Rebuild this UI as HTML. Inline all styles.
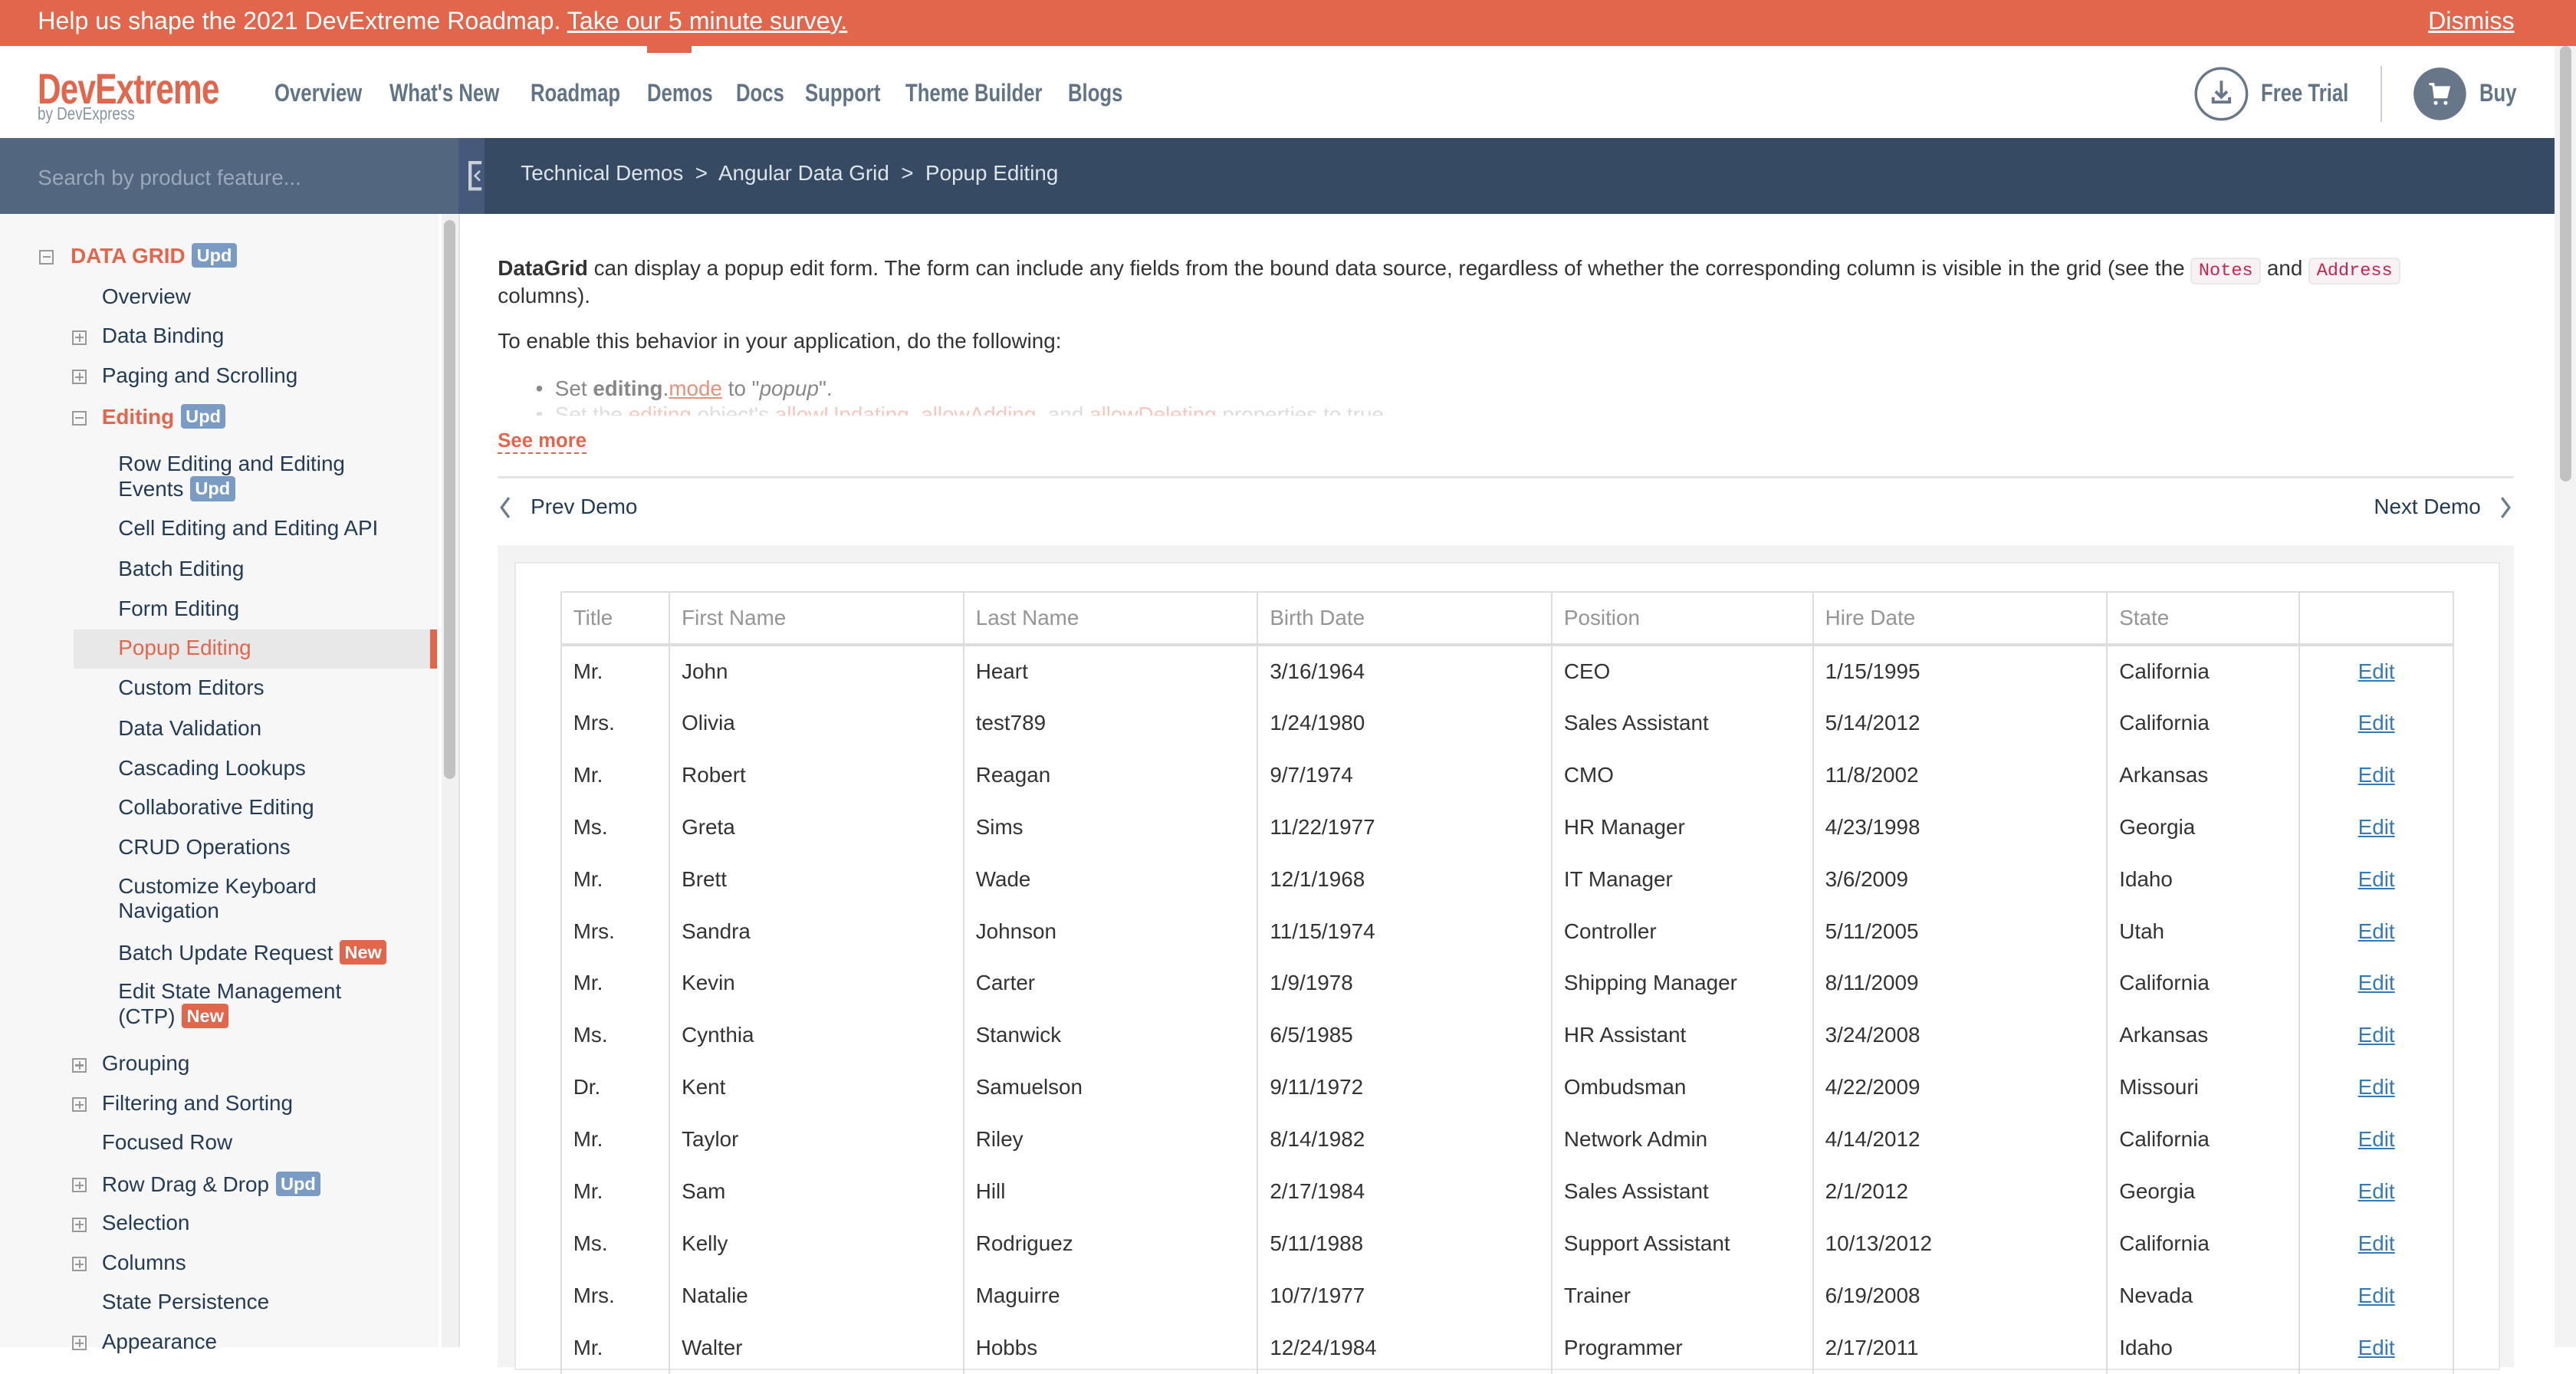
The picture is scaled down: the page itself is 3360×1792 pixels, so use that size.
<!DOCTYPE html>
<html><head><meta charset="utf-8">
<style>
html{zoom:2.14286}
body{margin:0;width:1568px;height:820px;overflow:hidden;font-family:"Liberation Sans",Arial,sans-serif;background:#fff;position:relative;color:#333}
.a{position:absolute;white-space:nowrap}
.banner{left:0;top:0;width:1568px;height:28px;background:#e2664c;color:#fff;font-size:15px}
.nav{font-family:"Liberation Sans",sans-serif;font-weight:bold;color:#617487;font-size:15px;transform:scaleX(0.8);transform-origin:0 0}
.si{position:absolute;left:62px;font-size:13px;color:#243b55;white-space:nowrap}
.s2{left:72px}
.pm{position:absolute;width:7px;height:7px;border:1px solid #999;font-size:0}
.pm:before{content:"";position:absolute;left:1px;top:3px;width:5px;height:1px;background:#999}
.pm.p:after{content:"";position:absolute;left:3px;top:1px;width:1px;height:5px;background:#999}
.badge{display:inline-block;color:#fff;font-weight:bold;font-size:11px;padding:0 3px;border-radius:2px;line-height:15px;vertical-align:1px;margin-left:4px}
.upd{background:#7a9cc4}.new{background:#e2664c}
table{border-collapse:collapse;font-size:13px;color:#333}
td,th{height:31.7px;padding:0 7px;text-align:left;font-weight:normal;box-sizing:border-box}
th{color:#959595;height:32px;border-right:1px solid #ddd;border-bottom:2px solid #ddd}
td{border-right:1px solid #ddd}
td a{color:#337ab7;text-decoration:underline}
code{font-family:"Liberation Mono",monospace;color:#c7254e;background:#f9f2f4;border:1px solid #e8e8e8;border-radius:3px;padding:1px 4px;font-size:11px}
</style></head><body>
<div class="a banner"><span class="a" style="left:23px;top:4px">Help us shape the 2021 DevExtreme Roadmap. <u>Take our 5 minute survey.</u></span><span class="a" style="left:1478px;top:4px"><u>Dismiss</u></span></div>
<div class="a" style="left:394px;top:28px;width:27px;height:4px;background:#e2664c"></div>
<div class="a" style="left:23px;top:39px;font-weight:bold;color:#e2664c;font-size:26px;letter-spacing:-0.5px;transform:scaleX(0.76);transform-origin:0 0">DevExtreme</div>
<div class="a" style="left:23px;top:63px;color:#8894a4;font-size:11px;transform:scaleX(0.8);transform-origin:0 0">by DevExpress</div>
<div class="a nav" style="left:167px;top:48px">Overview</div>
<div class="a nav" style="left:237px;top:48px">What's New</div>
<div class="a nav" style="left:323px;top:48px">Roadmap</div>
<div class="a nav" style="left:394px;top:48px">Demos</div>
<div class="a nav" style="left:448px;top:48px">Docs</div>
<div class="a nav" style="left:490px;top:48px">Support</div>
<div class="a nav" style="left:551px;top:48px">Theme Builder</div>
<div class="a nav" style="left:650px;top:48px">Blogs</div>
<svg class="a" style="left:1335px;top:40px" width="34" height="34" viewBox="0 0 34 34"><circle cx="17" cy="17" r="15.5" fill="none" stroke="#677789" stroke-width="1.6"/><path d="M17 9v10M13.5 15.5L17 19l3.5-3.5M12 19v3h10v-3" fill="none" stroke="#677789" stroke-width="1.8"/></svg>
<div class="a nav" style="left:1376px;top:48px">Free Trial</div>
<div class="a" style="left:1449px;top:40px;width:1px;height:34px;background:#ccd"></div>
<svg class="a" style="left:1468px;top:40px" width="34" height="34" viewBox="0 0 34 34"><circle cx="17" cy="17" r="16" fill="#677789"/><path d="M10.5 11h2.5l1 8h7l1.5-6h-9" fill="#fff" stroke="#fff" stroke-width="1.4"/><circle cx="14.5" cy="22.5" r="1.2" fill="#fff"/><circle cx="20.5" cy="22.5" r="1.2" fill="#fff"/></svg>
<div class="a nav" style="left:1509px;top:48px">Buy</div>
<div class="a" style="left:1555px;top:28px;width:13px;height:792px;background:#f3f3f3"></div>
<div class="a" style="left:1558px;top:28px;width:7px;height:265px;background:#c1c1c1;border-radius:4px"></div>
<div class="a" style="left:0;top:84px;width:1555px;height:46px;background:#364a63"></div>
<div class="a" style="left:0;top:84px;width:279px;height:46px;background:#52667f"></div>
<div class="a" style="left:23px;top:101px;color:#9aa8b8;font-size:13px">Search by product feature...</div>
<div class="a" style="left:279px;top:84px;width:16px;height:46px;background:#46597a"></div>
<svg class="a" style="left:285px;top:98px" width="12" height="18" viewBox="0 0 12 18"><path d="M8 1H1v16h7" fill="none" stroke="#c9d0d8" stroke-width="2"/><path d="M7 6l-3 3 3 3" fill="none" stroke="#c9d0d8" stroke-width="1.2"/></svg>
<div class="a" style="left:317px;top:98px;color:#dfe4ea;font-size:13px">Technical Demos &nbsp;&gt;&nbsp; Angular Data Grid &nbsp;&gt;&nbsp; Popup Editing</div>
<div class="a" style="left:0;top:130px;width:267px;height:690px;background:#f7f7f7"></div>
<div class="a" style="left:269px;top:130px;width:10px;height:690px;background:#f1f1f1;border-right:1px solid #e2e2e2"></div>
<div class="a" style="left:270px;top:134px;width:7px;height:340px;background:#c1c1c1;border-radius:4px"></div>
<div class="a" style="left:45px;top:383px;width:220px;height:24px;background:#e8e8e8"></div>
<div class="a" style="left:262px;top:383px;width:4px;height:24px;background:#e2664c"></div>
<span class="pm" style="left:24px;top:152px"></span>
<div class="si" style="left:43px;top:148px;color:#e2664c;font-weight:bold">DATA GRID<span class="badge upd">Upd</span></div>
<div class="si" style="top:173px">Overview</div>
<span class="pm p" style="left:44px;top:201px"></span><div class="si" style="top:197px">Data Binding</div>
<span class="pm p" style="left:44px;top:225px"></span><div class="si" style="top:221px">Paging and Scrolling</div>
<span class="pm" style="left:44px;top:250px"></span><div class="si" style="top:246px;color:#e2664c;font-weight:bold">Editing<span class="badge upd">Upd</span></div>
<div class="si s2" style="top:275px;line-height:15px">Row Editing and Editing<br>Events<span class="badge upd">Upd</span></div>
<div class="si s2" style="top:314px">Cell Editing and Editing API</div>
<div class="si s2" style="top:339px">Batch Editing</div>
<div class="si s2" style="top:363px">Form Editing</div>
<div class="si s2" style="top:387px;color:#e2664c">Popup Editing</div>
<div class="si s2" style="top:411px">Custom Editors</div>
<div class="si s2" style="top:436px">Data Validation</div>
<div class="si s2" style="top:460px">Cascading Lookups</div>
<div class="si s2" style="top:484px">Collaborative Editing</div>
<div class="si s2" style="top:508px">CRUD Operations</div>
<div class="si s2" style="top:532px;line-height:15px">Customize Keyboard<br>Navigation</div>
<div class="si s2" style="top:572px">Batch Update Request<span class="badge new">New</span></div>
<div class="si s2" style="top:596px;line-height:15px">Edit State Management<br>(CTP)<span class="badge new">New</span></div>
<span class="pm p" style="left:44px;top:644px"></span><div class="si" style="top:640px">Grouping</div>
<span class="pm p" style="left:44px;top:668px"></span><div class="si" style="top:664px">Filtering and Sorting</div>
<div class="si" style="top:688px">Focused Row</div>
<span class="pm p" style="left:44px;top:717px"></span><div class="si" style="top:713px">Row Drag &amp; Drop<span class="badge upd">Upd</span></div>
<span class="pm p" style="left:44px;top:741px"></span><div class="si" style="top:737px">Selection</div>
<span class="pm p" style="left:44px;top:765px"></span><div class="si" style="top:761px">Columns</div>
<div class="si" style="top:785px">State Persistence</div>
<span class="pm p" style="left:44px;top:813px"></span><div class="si" style="top:809px">Appearance</div>

<div class="a" style="left:303px;top:156px;width:1190px;font-size:13px;line-height:15px;white-space:normal;color:#333"><b>DataGrid</b> can display a popup edit form. The form can include any fields from the bound data source, regardless of whether the corresponding column is visible in the grid (see the <code>Notes</code> and <code>Address</code> columns).</div>
<div class="a" style="left:303px;top:200px;font-size:13px">To enable this behavior in your application, do the following:</div>
<div class="a" style="left:326px;top:229px;font-size:13px;color:#888">• &nbsp;Set <b>editing</b>.<u style="color:#e8907e">mode</u> to "<i>popup</i>".</div>
<div class="a" style="left:326px;top:245px;font-size:13px;color:#ddd;height:8px;overflow:hidden">• &nbsp;Set the <span style="color:#f4c8be">editing</span> object's <span style="color:#f4c8be">allowUpdating</span>, <span style="color:#f4c8be">allowAdding</span>, and <span style="color:#f4c8be">allowDeleting</span> properties to true.</div>
<div class="a" style="left:303px;top:262px;font-size:12px;font-weight:bold;color:#e2664c;border-bottom:1px dashed #e2664c">See more</div>
<div class="a" style="left:303px;top:290px;width:1227px;height:1px;background:#e4e4e4"></div>
<svg class="a" style="left:304px;top:302px" width="8" height="14" viewBox="0 0 8 14"><path d="M6 1L1.5 7 6 13" fill="none" stroke="#6a7b8e" stroke-width="1.5"/></svg>
<div class="a" style="left:323px;top:301px;font-size:13px;color:#243b55">Prev Demo</div>
<div class="a" style="left:1445px;top:301px;font-size:13px;color:#243b55">Next Demo</div>
<svg class="a" style="left:1521px;top:302px" width="8" height="14" viewBox="0 0 8 14"><path d="M2 1l4.5 6L2 13" fill="none" stroke="#6a7b8e" stroke-width="1.5"/></svg>
<div class="a" style="left:303px;top:332px;width:1227px;height:500px;background:#f3f3f3"></div>
<div class="a" style="left:313px;top:342px;width:1207px;height:490px;background:#fff;border:1px solid #e8e8e8"></div>
<div class="a" style="left:341px;top:360px">
<table style="width:1153px;border-left:1px solid #ddd;border-top:1px solid #ddd">
<colgroup><col style="width:66px"><col style="width:179px"><col style="width:179px"><col style="width:179px"><col style="width:159px"><col style="width:179px"><col style="width:117px"><col style="width:94px"></colgroup>
<tr><th>Title</th><th>First Name</th><th>Last Name</th><th>Birth Date</th><th>Position</th><th>Hire Date</th><th>State</th><th></th></tr>
<tr><td>Mr.</td><td>John</td><td>Heart</td><td>3/16/1964</td><td>CEO</td><td>1/15/1995</td><td>California</td><td style="text-align:center"><a>Edit</a></td></tr>
<tr><td>Mrs.</td><td>Olivia</td><td>test789</td><td>1/24/1980</td><td>Sales Assistant</td><td>5/14/2012</td><td>California</td><td style="text-align:center"><a>Edit</a></td></tr>
<tr><td>Mr.</td><td>Robert</td><td>Reagan</td><td>9/7/1974</td><td>CMO</td><td>11/8/2002</td><td>Arkansas</td><td style="text-align:center"><a>Edit</a></td></tr>
<tr><td>Ms.</td><td>Greta</td><td>Sims</td><td>11/22/1977</td><td>HR Manager</td><td>4/23/1998</td><td>Georgia</td><td style="text-align:center"><a>Edit</a></td></tr>
<tr><td>Mr.</td><td>Brett</td><td>Wade</td><td>12/1/1968</td><td>IT Manager</td><td>3/6/2009</td><td>Idaho</td><td style="text-align:center"><a>Edit</a></td></tr>
<tr><td>Mrs.</td><td>Sandra</td><td>Johnson</td><td>11/15/1974</td><td>Controller</td><td>5/11/2005</td><td>Utah</td><td style="text-align:center"><a>Edit</a></td></tr>
<tr><td>Mr.</td><td>Kevin</td><td>Carter</td><td>1/9/1978</td><td>Shipping Manager</td><td>8/11/2009</td><td>California</td><td style="text-align:center"><a>Edit</a></td></tr>
<tr><td>Ms.</td><td>Cynthia</td><td>Stanwick</td><td>6/5/1985</td><td>HR Assistant</td><td>3/24/2008</td><td>Arkansas</td><td style="text-align:center"><a>Edit</a></td></tr>
<tr><td>Dr.</td><td>Kent</td><td>Samuelson</td><td>9/11/1972</td><td>Ombudsman</td><td>4/22/2009</td><td>Missouri</td><td style="text-align:center"><a>Edit</a></td></tr>
<tr><td>Mr.</td><td>Taylor</td><td>Riley</td><td>8/14/1982</td><td>Network Admin</td><td>4/14/2012</td><td>California</td><td style="text-align:center"><a>Edit</a></td></tr>
<tr><td>Mr.</td><td>Sam</td><td>Hill</td><td>2/17/1984</td><td>Sales Assistant</td><td>2/1/2012</td><td>Georgia</td><td style="text-align:center"><a>Edit</a></td></tr>
<tr><td>Ms.</td><td>Kelly</td><td>Rodriguez</td><td>5/11/1988</td><td>Support Assistant</td><td>10/13/2012</td><td>California</td><td style="text-align:center"><a>Edit</a></td></tr>
<tr><td>Mrs.</td><td>Natalie</td><td>Maguirre</td><td>10/7/1977</td><td>Trainer</td><td>6/19/2008</td><td>Nevada</td><td style="text-align:center"><a>Edit</a></td></tr>
<tr><td>Mr.</td><td>Walter</td><td>Hobbs</td><td>12/24/1984</td><td>Programmer</td><td>2/17/2011</td><td>Idaho</td><td style="text-align:center"><a>Edit</a></td></tr>
</table></div>
</body></html>
